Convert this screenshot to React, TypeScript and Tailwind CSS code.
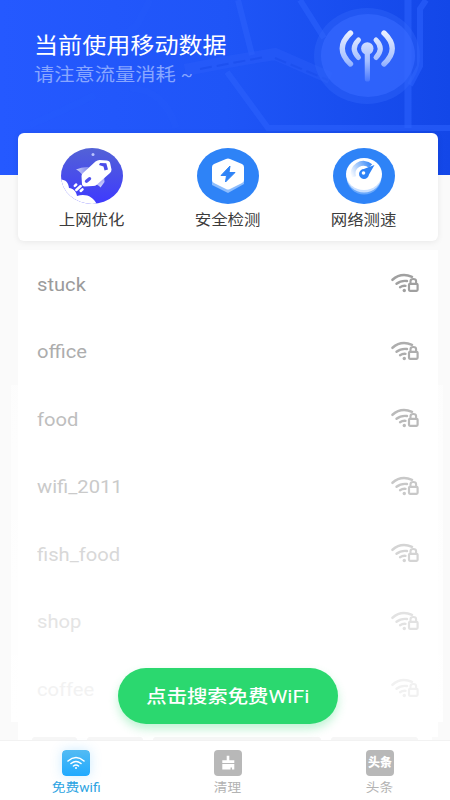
import type { ReactNode } from "react";

interface Network {
  name: string;
  color: string;
  iconColor: string;
}

const networks: Network[] = [
  { name: "stuck", color: "text-[#9b9b9b]", iconColor: "text-[#a0a0a0]" },
  { name: "office", color: "text-[#adadad]", iconColor: "text-[#adadad]" },
  { name: "food", color: "text-[#bebebe]", iconColor: "text-[#bababa]" },
  { name: "wifi_2011", color: "text-[#cacaca]", iconColor: "text-[#c8c8c8]" },
  { name: "fish_food", color: "text-[#d8d8d8]", iconColor: "text-[#d4d4d4]" },
  { name: "shop", color: "text-[#e4e4e4]", iconColor: "text-[#e2e2e2]" },
  { name: "coffee", color: "text-[#f2f2f2]", iconColor: "text-[#f1f1f1]" },
];

function MapLines() {
  return (
    <svg className="absolute inset-0" width="450" height="175" viewBox="0 0 450 175" fill="none">
      <g stroke="#2c60fb" strokeOpacity="0.6">
        <path d="M238 0L252 55M300 0L324 38M227 72L268 128H450" strokeWidth="6" />
        <path d="M408 0V128" strokeWidth="7" />
        <path d="M426 0L420 9V66L410 85" strokeWidth="6" />
        <path d="M185 70L227 62L275 54L330 78" strokeWidth="12" strokeOpacity="0.4" />
        <path d="M200 69L227 64L265 57M275 58L328 80" stroke="#1c4fee" strokeWidth="2" strokeDasharray="12 5" strokeOpacity="0.8" />
        <path d="M150 0L137 25L110 45M95 95Q60 112 30 125M130 88Q165 90 176 128" strokeWidth="7" strokeOpacity="0.12" />
      </g>
    </svg>
  );
}

function Antenna() {
  return (
    <svg className="absolute left-[312px] top-[7px]" width="110" height="98" viewBox="0 0 110 98" fill="none">
      <defs>
        <linearGradient id="antenna" x1="0" y1="23" x2="0" y2="75" gradientUnits="userSpaceOnUse">
          <stop stopColor="#eef3ff" />
          <stop offset="0.6" stopColor="#a5bfff" />
          <stop offset="1" stopColor="#4474ff" />
        </linearGradient>
      </defs>
      <ellipse cx="55" cy="49" rx="53" ry="48" fill="#3166fb" fillOpacity="0.4" />
      <ellipse cx="56" cy="48.500" rx="47" ry="41.500" fill="#3669ff" fillOpacity="0.65" />
      <circle cx="55.300" cy="41.500" r="6.200" fill="url(#antenna)" />
      <g stroke="url(#antenna)" strokeLinecap="round">
        <path d="M55.300 42L55.400 72" strokeWidth="5.200" />
        <path d="M46.500 33Q38 41.500 46.500 50.500M64 33Q72.500 41.500 64 50.500" strokeWidth="5" />
        <path d="M38.500 26Q22 41.500 38.500 57M72 26Q88.500 41.500 72 57" strokeWidth="5.400" />
      </g>
    </svg>
  );
}

function RocketIcon() {
  return (
    <svg width="64" height="57" viewBox="0 0 64 57" fill="none">
      <defs>
        <linearGradient id="rocket-bg" x1="0" y1="0" x2="0" y2="1">
          <stop stopColor="#5362d6" />
          <stop offset="1" stopColor="#3e39ff" />
        </linearGradient>
        <linearGradient id="fin-left" x1="0" y1="0" x2="1" y2="0">
          <stop stopColor="#ccd0fb" />
          <stop offset="1" stopColor="#7b83ea" />
        </linearGradient>
        <linearGradient id="fin-right" x1="0" y1="0" x2="0.500" y2="1">
          <stop stopColor="#6a6cee" />
          <stop offset="1" stopColor="#cdd0fc" />
        </linearGradient>
        <clipPath id="rocket-clip">
          <ellipse cx="32" cy="28" rx="31" ry="28" />
        </clipPath>
      </defs>
      <g clipPath="url(#rocket-clip)">
        <rect width="64" height="57" fill="url(#rocket-bg)" />
        <path d="M0 31.500C5 31 8.500 34.500 9 40C13 40.500 16.500 43.500 17 48C26 45 34 49 37 57H0Z" fill="#fff" />
      </g>
      <path d="M16 21.500Q22 18.500 29 19L23 28Q20 23 16 21.500Z" fill="url(#fin-left)" />
      <path d="M44 27L44.500 34L40.500 39.500Q38.500 36.500 34 36Z" fill="url(#fin-right)" />
      <path d="M22 36.500L21.500 28Q21.500 26.500 23 25L35.500 13.500Q37.500 12 39.500 12L47 12.500Q49.500 12.800 50 14.500L51.500 21.500Q51.500 23.500 50 25L37 36.500Q35.500 38 33 38L24.500 38.500Q22.500 38.500 22 36.500Z" fill="#fff" />
      <path d="M40 15L46.300 15.300L48 21.500L44.500 22.500L43.500 18.500L39 17Z" fill="#4a4ce9" />
      <path d="M26.500 33.200L29.500 30.700" stroke="#5152ee" strokeWidth="3.400" strokeLinecap="round" />
      <path d="M14.800 37.800L16.200 36.500M16.300 42L20.700 38M20.700 43L22.500 41.300" stroke="#fff" strokeWidth="2.500" strokeLinecap="round" />
      <circle cx="33" cy="6.500" r="1.500" fill="#b9c3ff" />
    </svg>
  );
}

function ShieldIcon() {
  return (
    <svg width="64" height="57" viewBox="0 0 64 57" fill="none">
      <ellipse cx="32" cy="28" rx="31" ry="28" fill="#2e83f7" />
      <path d="M16 22L32 14L48 22V36L32 45L16 37Z" fill="#8dbdfd" />
      <path d="M30 11Q32 10 34 11L46 16Q48 17 48 19V32Q48 34 46 35L34 41Q32 42 30 41L18 35Q16 34 16 32V19Q16 17 18 16Z" fill="#fff" />
      <path d="M34 18L25 27.500H30.500L29.500 34L39 24.500H33Z" fill="#2e83f7" stroke="#2e83f7" strokeWidth="1" strokeLinejoin="round" />
    </svg>
  );
}

function GaugeIcon() {
  return (
    <svg width="64" height="57" viewBox="0 0 64 57" fill="none">
      <defs>
        <linearGradient id="gauge" x1="19" y1="28" x2="41" y2="17" gradientUnits="userSpaceOnUse">
          <stop stopColor="#fff" />
          <stop offset="1" stopColor="#2e83f7" />
        </linearGradient>
      </defs>
      <ellipse cx="32" cy="28" rx="31" ry="28" fill="#2e83f7" />
      <ellipse cx="32" cy="30.500" rx="17" ry="16" fill="#69a8fb" />
      <ellipse cx="32" cy="28.500" rx="17.500" ry="16" fill="#c8dfff" />
      <ellipse cx="32" cy="26" rx="18" ry="16" fill="#fff" />
      <path d="M21.500 29A10.500 10.500 0 0 1 38.500 18" stroke="url(#gauge)" strokeWidth="5" />
      <path d="M42.500 17L33 20.500L32 21A5 5 0 1 0 37 26.500Z" fill="#2e83f7" />
      <circle cx="31.500" cy="25" r="1.800" fill="#fff" />
    </svg>
  );
}

function LockedWifi() {
  return (
    <svg width="28" height="21" viewBox="0 0 28 21" fill="none" stroke="currentColor" strokeLinecap="round">
      <path d="M1.500 6.800Q10 -0.800 21 3.800" strokeWidth="2.500" />
      <path d="M5.500 10.800Q10 7.200 16 8" strokeWidth="2.400" />
      <path d="M9 14.200Q11.500 12.500 14.500 12.800" strokeWidth="2.300" />
      <circle cx="13.300" cy="17.500" r="1.700" fill="currentColor" stroke="none" />
      <rect x="18" y="10.800" width="8.600" height="7" rx="1" strokeWidth="2.200" />
      <path d="M19.500 10V8.200Q19.500 6 22.300 6Q25.100 6 25.100 8.200V10" strokeWidth="2.100" />
    </svg>
  );
}

function Feature({ icon, label }: { icon: ReactNode; label: string }) {
  return (
    <div className="flex w-[136px] flex-col items-center">
      {icon}
      <span className="mt-[5px] origin-center scale-x-[1.11] text-[14.800px] leading-[20px] text-[#3c3c3c]">{label}</span>
    </div>
  );
}

function Tab({ icon, label, active = false }: { icon: ReactNode; label: string; active?: boolean }) {
  return (
    <div className="flex w-[152px] shrink-0 flex-col items-center pt-[9px]">
      {icon}
      <span
        className={
          active
            ? "mt-[2px] scale-x-[1.1] text-[12.500px] leading-[20px] text-[#2ba3e2]"
            : "mt-[2px] scale-x-[1.09] text-[12.500px] leading-[20px] text-[#b3b3b3]"
        }
      >
        {label}
      </span>
    </div>
  );
}

export default function App() {
  return (
    <div className="relative flex h-[800px] w-[450px] flex-col overflow-hidden bg-[#fafafa] font-['Roboto','Noto_Sans_CJK_SC',sans-serif]">
      <header className="relative h-[175px] shrink-0 bg-linear-to-r from-[#2559ff] via-[#1f55f7] to-[#1347e8] pl-[34px] pt-[32px]">
        <MapLines />
        <Antenna />
        <h1 className="relative w-max origin-left scale-x-[1.12] text-[21.500px] leading-[28px] text-white">当前使用移动数据</h1>
        <p className="relative w-max origin-left scale-x-[1.1] text-[18.400px] leading-[29px] text-[#88a6ff]">
          请注意流量消耗 <span className="text-[16px]">~</span>
        </p>
      </header>

      <section className="relative z-10 mx-[18px] mt-[-42px] flex h-[108px] w-[420px] shrink-0 justify-center rounded-[6px] bg-white pt-[15px] shadow-[0_1px_6px_rgba(0,0,0,0.08)]">
        <Feature icon={<RocketIcon />} label="上网优化" />
        <Feature icon={<ShieldIcon />} label="安全检测" />
        <Feature icon={<GaugeIcon />} label="网络测速" />
      </section>

      {/* soft white haze that spills past the list edges */}
      <div className="absolute left-[11px] top-[385px] h-[337px] w-[432px] bg-linear-to-b from-white/50 to-white" />

      <ul className="relative mx-[18px] mt-[9px] h-[487px] w-[420px] shrink-0 bg-white pt-px">
        {networks.map((n) => (
          <li key={n.name} className={`flex h-[67.500px] items-center justify-between px-[19px] ${n.color}`}>
            <span className="origin-left scale-x-[1.09] text-[18.500px] leading-[24px]">{n.name}</span>
            <span className={`pb-[2px] ${n.iconColor}`}>
              <LockedWifi />
            </span>
          </li>
        ))}
      </ul>
      <div className="relative mx-[18px] flex h-[3px] shrink-0 gap-[10px] bg-white px-[14px]">
        <div className="w-[45px] rounded-t bg-[#f6f6f6]" />
        <div className="w-[56px] rounded-t bg-[#f6f6f6]" />
        <div className="w-[168px] rounded-t bg-[#f6f6f6]" />
        <div className="flex-1 rounded-t bg-[#f6f6f6]" />
      </div>

      <button className="absolute left-[118px] top-[668px] flex h-[56px] w-[220px] items-center justify-center rounded-full bg-[#2bd86f] pt-px text-white shadow-[0_5px_10px_rgba(43,216,111,0.3)]">
        <span className="scale-x-[1.12] whitespace-nowrap text-[18.200px] font-medium leading-[28px]">
          点击搜索免费<span className="text-[19px] font-normal">WiFi</span>
        </span>
      </button>

      <nav className="absolute bottom-0 left-0 flex h-[60px] w-[450px] border-t border-[#f2f2f2] bg-white">
        <Tab
          active
          label="免费wifi"
          icon={
            <svg className="rounded-[4px] shadow-[0_0_12px_rgba(60,180,255,0.25)]" width="28" height="26" viewBox="0 0 28 26" fill="none">
              <defs>
                <linearGradient id="wifi-tab" x1="0" y1="0" x2="0" y2="1">
                  <stop stopColor="#53bbf3" />
                  <stop offset="1" stopColor="#20aaff" />
                </linearGradient>
              </defs>
              <rect width="28" height="26" rx="4" fill="url(#wifi-tab)" />
              <path d="M6 11Q14 4 22 11M9 13.500Q14 9.500 19 13.500M11.500 16Q14 14 16.500 16" stroke="#fff" strokeWidth="1.600" strokeLinecap="round" />
              <circle cx="14" cy="18" r="1" fill="#fff" />
            </svg>
          }
        />
        <Tab
          label="清理"
          icon={
            <svg width="28" height="26" viewBox="0 0 28 26" fill="none">
              <rect width="28" height="26" rx="4" fill="#b8b8b8" />
              <path d="M12.700 5.700H15.300V10.300H20.300V13H8.300V10.300H12.700ZM8.300 14H20.300V19.500H18V17.500H16.500V19.500H8.300Z" fill="#fff" />
            </svg>
          }
        />
        <Tab
          label="头条"
          icon={
            <div className="flex h-[26px] w-[28px] items-center justify-center rounded-[4px] bg-[#b8b8b8]">
              <span className="whitespace-nowrap text-[12px] font-black leading-none text-white">头条</span>
            </div>
          }
        />
      </nav>
    </div>
  );
}
